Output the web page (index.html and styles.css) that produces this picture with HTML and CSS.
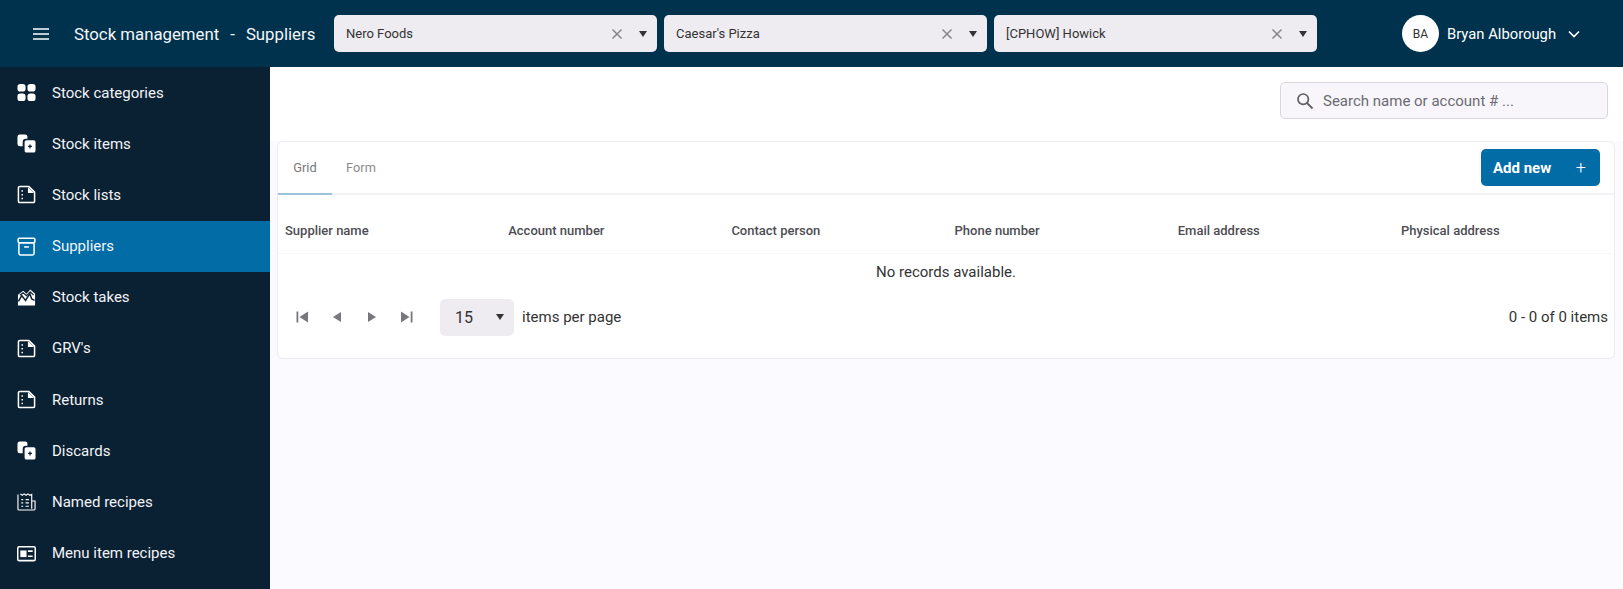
FILE: index.html
```html
<!DOCTYPE html>
<html lang="en">
<head>
<meta charset="utf-8">
<title>Suppliers</title>
<link rel="stylesheet" href="styles.css">
</head>
<body>
<header class="topbar">
  <button class="burger" aria-label="Menu"><svg width="18" height="14" viewBox="0 0 18 14"><path d="M1 2h16M1 7h16M1 12h16" stroke="#fff" stroke-width="1.4" fill="none"/></svg></button>
  <div class="title"><span>Stock management</span><span class="dash">-</span><span>Suppliers</span></div>
  <div class="picker p1"><span class="picker-text">Nero Foods</span><svg class="x" viewBox="0 0 12 12"><path d="M1.500 1.500l9 9M10.500 1.500l-9 9"/></svg><span class="caret"></span></div>
  <div class="picker p2"><span class="picker-text">Caesar's Pizza</span><svg class="x" viewBox="0 0 12 12"><path d="M1.500 1.500l9 9M10.500 1.500l-9 9"/></svg><span class="caret"></span></div>
  <div class="picker p3"><span class="picker-text">[CPHOW] Howick</span><svg class="x" viewBox="0 0 12 12"><path d="M1.500 1.500l9 9M10.500 1.500l-9 9"/></svg><span class="caret"></span></div>
  <div class="user">
    <span class="avatar">BA</span>
    <span class="user-name">Bryan Alborough</span>
    <svg width="12" height="8" viewBox="0 0 12 8"><path d="M1 1.500l5 5 5-5" stroke="#fff" stroke-width="1.600" fill="none"/></svg>
  </div>
</header>
<div class="shell">
  <nav class="side">
    <a class="item"><svg class="ic" viewBox="0 0 20 20"><rect x="0.500" y="1" width="8.500" height="8" rx="3"/><rect x="11" y="1" width="8.500" height="8" rx="3"/><rect x="0.500" y="11" width="8.500" height="8" rx="3"/><rect x="11" y="11" width="8.500" height="8" rx="3"/></svg>Stock categories</a>
    <a class="item"><svg class="ic" viewBox="0 0 20 20"><path d="M3 0.500h5.500a2.500 2.500 0 0 1 2.500 2.500v2H9.500a3.500 3.500 0 0 0-3.500 3.500V13H3a2.500 2.500 0 0 1-2.500-2.500V3A2.500 2.500 0 0 1 3 0.500z"/><rect x="8" y="6.500" width="11.500" height="13" rx="2"/><path d="M13.700 11v4.200M11.700 13.100h4.100" stroke="#0a2033" stroke-width="1.300"/></svg>Stock items</a>
    <a class="item"><svg class="ic line" viewBox="0 0 20 20"><path d="M3 1.500h9.500L18.500 7.500V17a1.500 1.500 0 0 1-1.500 1.500H3A1.500 1.500 0 0 1 1.500 17V3A1.500 1.500 0 0 1 3 1.500z"/><path d="M11.500 2v6.500h6.500z" class="fillw"/><path d="M5.500 5.500v1.500M5.500 9.500v1.500M5.500 13.500v1.500"/></svg>Stock lists</a>
    <a class="item active"><svg class="ic line" viewBox="0 0 20 20"><rect x="1.200" y="1.200" width="17.600" height="4.800" rx="1.200"/><rect x="2" y="6" width="16" height="13" rx="1.800"/><path d="M7.500 10.500h5"/></svg>Suppliers</a>
    <a class="item"><svg class="ic" viewBox="0 0 20 20"><path d="M1 7L6.500 3 10 6 14 1.500 19 6V18.500H1z"/><path d="M1.500 14L5 8 9 13 13.500 6 15.500 11.500 18.500 13" stroke="#0a2033" stroke-width="1.600" fill="#0a2033" fill-opacity="0"/><path d="M3 7.500l3.500-2.500 3.500 3 4-4 3.500 3.500" stroke="#0a2033" stroke-width="1.300" fill="none"/></svg>Stock takes</a>
    <a class="item"><svg class="ic line" viewBox="0 0 20 20"><path d="M3 1.500h9.500L18.500 7.500V17a1.500 1.500 0 0 1-1.500 1.500H3A1.500 1.500 0 0 1 1.500 17V3A1.500 1.500 0 0 1 3 1.500z"/><path d="M11.500 2v6.500h6.500z" class="fillw"/><path d="M5.500 5.500v1.500M5.500 9.500v1.500M5.500 13.500v1.500"/></svg>GRV's</a>
    <a class="item"><svg class="ic line" viewBox="0 0 20 20"><path d="M3 1.500h9.500L18.500 7.500V17a1.500 1.500 0 0 1-1.500 1.500H3A1.500 1.500 0 0 1 1.500 17V3A1.500 1.500 0 0 1 3 1.500z"/><path d="M11.500 2v6.500h6.500z" class="fillw"/><path d="M5.500 5.500v1.500M5.500 9.500v1.500M5.500 13.500v1.500"/></svg>Returns</a>
    <a class="item"><svg class="ic" viewBox="0 0 20 20"><path d="M3 0.500h5.500a2.500 2.500 0 0 1 2.500 2.500v2H9.500a3.500 3.500 0 0 0-3.500 3.500V13H3a2.500 2.500 0 0 1-2.500-2.500V3A2.500 2.500 0 0 1 3 0.500z"/><rect x="8" y="6.500" width="11.500" height="13" rx="2"/><path d="M13.700 11v4.200M11.700 13.100h4.100" stroke="#0a2033" stroke-width="1.300"/></svg>Discards</a>
    <a class="item"><svg class="ic line thin" viewBox="0 0 20 20"><path d="M1 2.500V18a1 1 0 0 0 1 1h15.500A1.500 1.500 0 0 0 19 17.500V9.500h-3.500M15.500 17.500V2.500l-2 1-2-1.500-2 1.500-2-1.500-2 1.500-2-1.500"/><path d="M4.500 8h2M9 8h3.500M4.500 11.500h2M9 11.500h3.500M4.500 15h2M9 15h3.500"/></svg>Named recipes</a>
    <a class="item"><svg class="ic line" viewBox="0 0 20 20"><rect x="0.800" y="3" width="18.400" height="14.500" rx="1.500"/><rect x="3.500" y="6.800" width="6.500" height="7" class="solid"/><path d="M11.500 7.500h5M11.500 13h5"/></svg>Menu item recipes</a>
  </nav>
  <main class="main">
    <div class="searchbar">
      <div class="search">
        <svg width="18" height="18" viewBox="0 0 18 18"><circle cx="7.200" cy="7.200" r="5.200" stroke="#5f5f66" stroke-width="1.700" fill="none"/><path d="M11 11l5.500 5.500" stroke="#5f5f66" stroke-width="1.800"/></svg>
        <span>Search name or account # ...</span>
      </div>
    </div>
    <section class="card">
      <div class="tabs">
        <span class="tab on">Grid</span>
        <span class="tab second">Form</span>
        <button class="add"><span>Add new</span><span class="plus">+</span></button>
      </div>
      <div class="thead">
        <span>Supplier name</span><span>Account number</span><span>Contact person</span><span>Phone number</span><span>Email address</span><span>Physical address</span>
      </div>
      <div class="empty">No records available.</div>
      <div class="pager">
        <div class="pg-btns">
          <svg class="pg" viewBox="0 0 14 14"><path d="M1.500 1.500h1.800v11H1.500zM13 1.500v11L4.500 7z"/></svg>
          <svg class="pg" viewBox="0 0 14 14"><path d="M11 2v10L3 7z"/></svg>
          <svg class="pg" viewBox="0 0 14 14"><path d="M3 2v10l8-5z"/></svg>
          <svg class="pg" viewBox="0 0 14 14"><path d="M12.500 1.500h-1.800v11h1.800zM1 1.500v11L9.500 7z"/></svg>
        </div>
        <div class="size"><span>15</span><span class="caret"></span></div>
        <span class="per">items per page</span>
        <span class="count">0 - 0 of 0 items</span>
      </div>
    </section>
  </main>
</div>
</body>
</html>
```
FILE: styles.css
```css
* { box-sizing: border-box; }
html, body { margin: 0; height: 100%; overflow: hidden; }
body { font-family: Roboto, "Liberation Sans", sans-serif; background: #fbfaff; color: #333; }
.topbar { height: 67px; background: #00324d; display: flex; align-items: center; color: #fff; padding-left: 32px; }
.burger { background: none; border: 0; padding: 0; width: 18px; height: 14px; display: flex; margin-right: 24px; }
.title { width: 260px; font-size: 16.800px; font-weight: 400; display: flex; gap: 11px; color: #f4f6f8; }
.picker { height: 37px; background: #eeecf0; border-radius: 5px; display: flex; align-items: center; color: #333; font-size: 13px; padding: 0 10px 0 12px; margin-right: 7px; }
.p1 { width: 323px; }
.p2 { width: 323px; }
.p3 { width: 323px; margin-right: 85px; }
.picker-text { flex: 1; }
.x { width: 12px; height: 12px; fill: none; stroke: #85858b; stroke-width: 1.500; margin-right: 16px; margin-left: 1px; }
.caret { width: 0; height: 0; border-left: 4px solid transparent; border-right: 4px solid transparent; border-top: 6px solid #333; }
.user { display: flex; align-items: center; }
.avatar { width: 37px; height: 37px; border-radius: 50%; background: #fff; color: #333; font-size: 12px; display: flex; align-items: center; justify-content: center; margin-right: 8px; }
.user-name { font-size: 14.800px; font-weight: 400; margin-right: 12px; }
.shell { display: flex; height: 522px; }
.side { width: 270px; background: #0a2033; flex: none; }
.item { height: 51.180px; display: flex; align-items: center; color: #f2f4f8; font-size: 15px; padding-left: 17px; gap: 16px; }
.item.active { background: #016ca6; }
.ic { width: 19px; height: 19px; fill: #fff; flex: none; }
.ic.line { fill: none; stroke: #fff; stroke-width: 1.600; }
.ic.thin { stroke-width: 1.200; }
.ic .fillw { fill: #fff; stroke: none; }
.ic .solid { fill: #fff; stroke: none; }
.main { flex: 1; min-width: 0; }
.searchbar { height: 74px; background: #fff; display: flex; justify-content: flex-end; padding: 15px 15px 0 0; }
.search { width: 328px; height: 37px; border: 1px solid #d8d6dc; border-radius: 5px; background: #f8f6fa; display: flex; align-items: center; padding-left: 15px; gap: 9px; color: #6b6b72; font-size: 15px; }
.card { margin: 0 8px 0 7px; height: 218px; background: #fff; border: 1px solid #ececf0; border-radius: 6px; }
.tabs { height: 53px; display: flex; align-items: stretch; border-bottom: 2px solid #f3f2f5; font-size: 12.800px; position: relative; }
.tab { width: 54px; display: flex; align-items: center; justify-content: center; color: #8b8b90; margin-bottom: -2px; }
.tab.second { padding: 0 0 2px 4px; }
.tab.on { color: #777; border-bottom: 2px solid #9cc3da; }
.add { margin: 7px 14px 7px auto; width: 119px; height: 37px; background: #016ca6; color: #fff; border: 0; border-radius: 5px; font: 700 15px Roboto, sans-serif; display: flex; align-items: center; justify-content: space-between; padding: 0 14px 0 12px; }
.plus { font-weight: 300; font-size: 18px; }
.thead { height: 59px; display: grid; grid-template-columns: repeat(6, 223.200px); align-items: center; padding: 12px 0 0 7px; font-size: 13px; font-weight: 500; color: #4d4d53; border-bottom: 1px solid #f8f8fa; }
.empty { height: 35px; display: flex; align-items: center; justify-content: center; font-size: 15px; color: #333; }
.pager { display: flex; align-items: center; height: 38px; margin-top: 9px; padding-left: 17px; }
.pg-btns { display: flex; gap: 21px; margin-right: 26px; }
.pg { width: 14px; height: 14px; fill: #77777c; }
.size { width: 74px; height: 37px; background: #eeecf0; border-radius: 5px; display: flex; align-items: center; justify-content: space-between; padding: 0 10px 0 15px; font-size: 16px; margin-right: 8px; }
.per { font-size: 15px; }
.count { margin-left: auto; font-size: 15px; padding-right: 6px; }
```
